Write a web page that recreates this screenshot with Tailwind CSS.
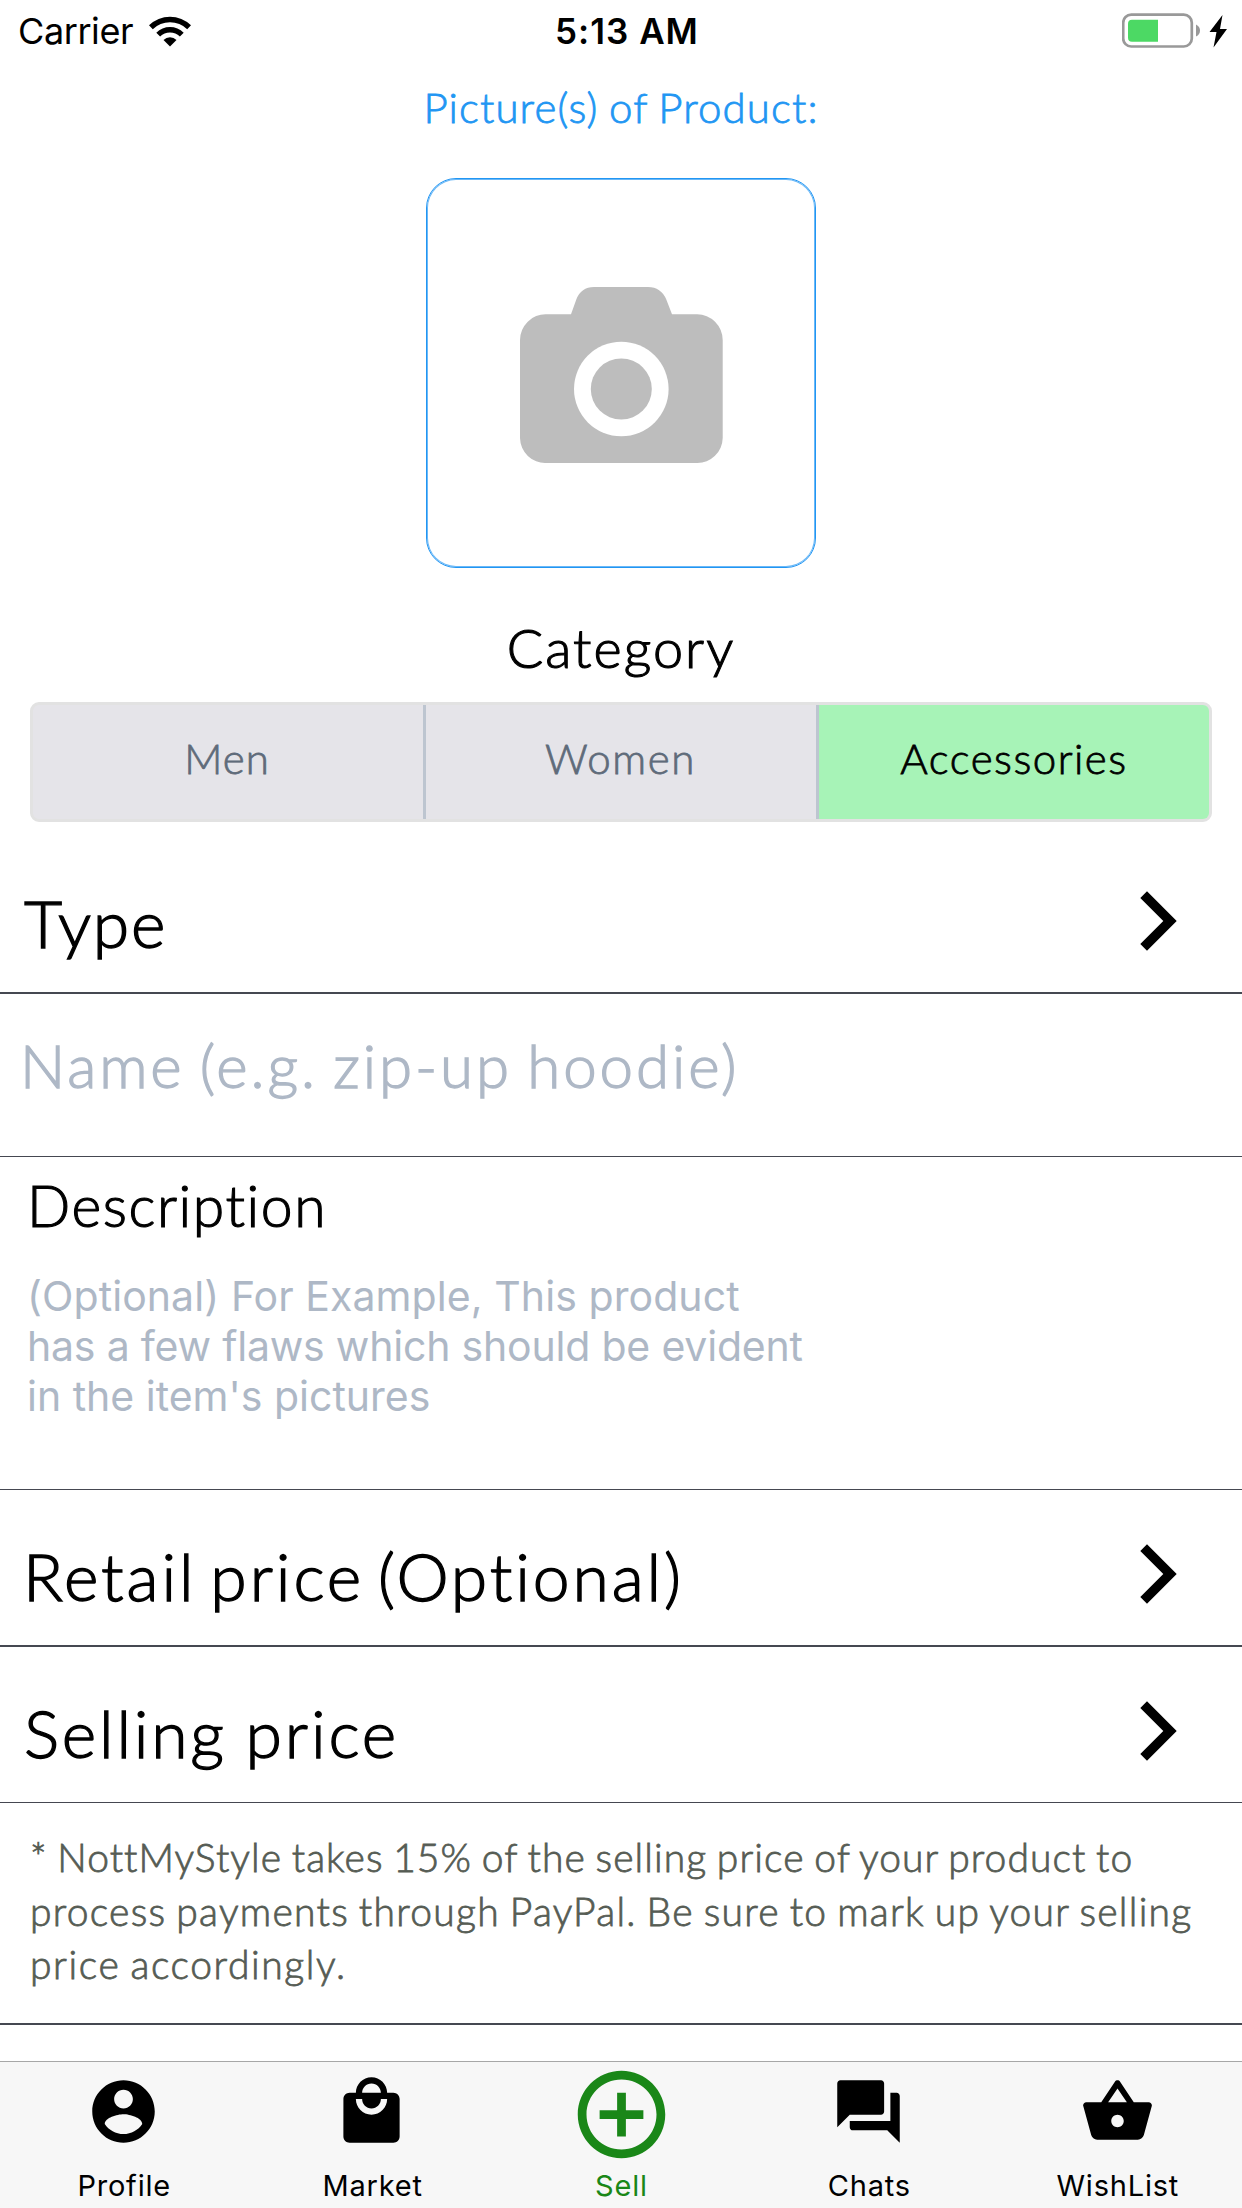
<!DOCTYPE html>
<html lang="en">
<head>
<meta charset="utf-8">
<title>Sell</title>
<script src="https://cdn.jsdelivr.net/npm/@tailwindcss/browser@4"></script>
</head>
<body class="bg-white">
<div class="w-[1242px] h-[2208px] flex flex-col overflow-hidden bg-white text-black font-['Lato',sans-serif] font-light [-webkit-text-stroke:0.8px]">

  <header class="relative h-[62px] shrink-0 flex items-center justify-between pl-[18px] pr-[14px] font-['Inter',sans-serif] font-normal [-webkit-text-stroke:0]">
    <div class="flex items-center gap-[16px]">
      <span class="text-[36px] tracking-[-0.41px]">Carrier</span>
      <svg class="w-[42px] h-[31px]" viewBox="0 0 42 31">
        <path d="M0 9.3A30 30 0 0 1 42 9.3L38.2 13.2A24.6 24.6 0 0 0 3.8 13.2Z"/>
        <path d="M7.3 16.7A19.6 19.6 0 0 1 34.7 16.7L30.9 20.6A14.2 14.2 0 0 0 11.1 20.6Z"/>
        <path d="M14.5 24A9.3 9.3 0 0 1 27.5 24L21 30.5Z"/>
      </svg>
    </div>
    <span class="absolute left-1/2 -translate-x-1/2 ml-[6px] text-[35px] font-semibold tracking-[1px] whitespace-nowrap">5:13 AM</span>
    <svg class="w-[106px] h-[36px]" viewBox="0 0 106 36">
      <rect x="1.2" y="1.7" width="68.6" height="31.8" rx="8" fill="none" stroke="#999" stroke-width="2.7"/>
      <path d="M10 6.700H36V28.700H10Q6 28.700 6 24.700V10.700Q6 6.700 10 6.700Z" fill="#4cd964"/>
      <path d="M74 11.500Q78 13.500 78 17.500T74 23.500Z" fill="#999"/>
      <path d="M100.500 2L87.500 19H94.500L91.500 34.500L105 16H98Z"/>
    </svg>
  </header>

  <main class="flex flex-col">
    <div class="h-[89px] pt-[2px] flex items-center justify-center text-[42px] tracking-[1.1px] [word-spacing:-2px] text-[#2196f3]">Picture(s) of Product:</div>

    <div class="mt-[27px] mx-auto size-[390px] rounded-[30px] border border-[#2196f3] shadow-[inset_0_0_0_1px_#6bb8f7] flex justify-center pt-[108px]">
      <svg class="w-[203px] h-[176px]" viewBox="0 0 203 176">
        <path fill="#bdbdbd" d="M51 27.300L56.300 12.500Q61 0 74 0H128Q141 0 146.300 12.500L152 27.300H177A25.500 26 0 0 1 202.700 53V151A25.500 25.500 0 0 1 177 176H26A25.500 25.500 0 0 1 0 151V53A25.500 26 0 0 1 26 27.300Z"/>
        <circle cx="101.300" cy="102" r="47.300" fill="#fff"/>
        <circle cx="101.300" cy="102" r="30.500" fill="#bdbdbd"/>
      </svg>
    </div>

    <div class="mt-[22px] h-[112px] pt-[2px] flex items-center justify-center text-[54px] tracking-[2px] [-webkit-text-stroke:1.1px]">Category</div>

    <div class="mx-[30px] h-[120px] flex rounded-[9px] border-[3px] border-[#e2e2e2] bg-[#e5e4e9] text-[42px] text-[#5f6b7a] overflow-hidden">
      <div class="w-[393px] border-r-[3px] border-[#bdc5d0] flex items-center justify-center pb-[7px] pr-[2px] tracking-[1px]">Men</div>
      <div class="w-[393px] border-r-[3px] border-[#bdc5d0] flex items-center justify-center pb-[7px] pr-px tracking-[1.6px]">Women</div>
      <div class="flex-1 flex items-center justify-center pb-[7px] tracking-[1.5px] bg-[#a7f3b7] text-black">Accessories</div>
    </div>

    <div class="mt-[28px] h-[144px] flex items-center justify-between pl-[24px] pr-[65px] border-b-2 border-[#454851]">
      <span class="pt-[2px] text-[66px] tracking-[1.7px] [-webkit-text-stroke:1.3px]">Type</span>
      <svg class="w-[37px] h-[60px]" viewBox="0 0 37 60"><path d="M0.300 7L7 0.300L36.700 30L7 59.700L0.300 53L23.300 30Z"/></svg>
    </div>

    <div class="h-[163px] flex items-center pl-[20px] pb-[20px] border-b border-[#454851] text-[60px] tracking-[2.92px] [word-spacing:-4px] text-[#aeb8c6] [-webkit-text-stroke:1.3px]">Name (e.g. zip-up hoodie)</div>

    <div class="h-[333px] pl-[27px] border-b border-[#454851]">
      <div class="h-[94px] pt-[3px] flex items-center text-[57px] tracking-[1.55px] [-webkit-text-stroke:1.1px]">Description</div>
      <div class="mt-[20px] flex flex-col font-['Inter',sans-serif] font-normal text-[41px] leading-[50px] text-[#aeb8c6] [-webkit-text-stroke:0]">
        <span class="tracking-[0.08px]">(Optional) For Example, This product</span>
        <span class="tracking-[-0.2px]">has a few flaws which should be evident</span>
        <span>in the item's pictures</span>
      </div>
    </div>

    <div class="h-[157px] flex items-center justify-between pt-[13px] pl-[23px] pr-[65px] border-b-2 border-[#454851]">
      <span class="pt-[2px] text-[66px] tracking-[2.9px] [word-spacing:-7px] [-webkit-text-stroke:1.3px]">Retail price (Optional)</span>
      <svg class="w-[37px] h-[60px]" viewBox="0 0 37 60"><path d="M0.300 7L7 0.300L36.700 30L7 59.700L0.300 53L23.300 30Z"/></svg>
    </div>

    <div class="h-[156px] flex items-center justify-between pt-[13px] pl-[24px] pr-[65px] border-b border-[#454851]">
      <span class="pt-[2px] text-[66px] tracking-[2.8px] [word-spacing:-2px] [-webkit-text-stroke:1.3px]">Selling price</span>
      <svg class="w-[37px] h-[60px]" viewBox="0 0 37 60"><path d="M0.300 7L7 0.300L36.700 30L7 59.700L0.300 53L23.300 30Z"/></svg>
    </div>

    <div class="h-[222px] flex flex-col pt-[28px] pl-[30px] border-b-2 border-[#454851] text-[39px] leading-[53.6px] text-[#565c54] [word-spacing:-2px] whitespace-nowrap">
      <span class="tracking-[1.07px]">* NottMyStyle takes 15% of the selling price of your product to</span>
      <span class="tracking-[1.28px]">process payments through PayPal. Be sure to mark up your selling</span>
      <span class="tracking-[1.6px]">price accordingly.</span>
    </div>
  </main>

  <nav class="mt-auto h-[147px] shrink-0 grid grid-cols-5 border-t border-[#a7a7a7] bg-[#f7f7f7] font-['Inter',sans-serif] font-normal text-[29px] leading-[37px] tracking-[0.8px] text-center [-webkit-text-stroke:0]">
    <div class="flex flex-col items-center">
      <div class="h-[105px] pt-[11.5px] pr-[2px]">
        <svg class="size-[75px]" viewBox="0 0 24 24"><path d="M12 2C6.480 2 2 6.480 2 12s4.480 10 10 10 10-4.480 10-10S17.520 2 12 2zm0 3c1.660 0 3 1.340 3 3s-1.340 3-3 3-3-1.340-3-3 1.340-3 3-3zm0 14.200c-2.500 0-4.710-1.280-6-3.220.030-1.990 4-3.080 6-3.080 1.990 0 5.970 1.090 6 3.080-1.290 1.940-3.500 3.220-6 3.220z"/></svg>
      </div>
      <span>Profile</span>
    </div>
    <div class="flex flex-col items-center">
      <div class="h-[105px] pt-[11.5px] pr-[2px]">
        <svg class="size-[75px]" viewBox="0 0 24 24"><path d="M19 6h-2c0-2.760-2.240-5-5-5S7 3.240 7 6H5c-1.100 0-1.990.900-1.990 2L3 20c0 1.100.900 2 2 2h14c1.100 0 2-.900 2-2V8c0-1.100-.900-2-2-2zm-7-3c1.660 0 3 1.340 3 3H9c0-1.660 1.340-3 3-3zm0 10c-2.760 0-5-2.240-5-5h2c0 1.660 1.340 3 3 3s3-1.340 3-3h2c0 2.760-2.240 5-5 5z"/></svg>
      </div>
      <span>Market</span>
    </div>
    <div class="flex flex-col items-center pl-px text-[#1a8718]">
      <svg class="size-[105px]" viewBox="0 0 24 24" fill="currentColor"><path d="M13 7h-2v4H7v2h4v4h2v-4h4v-2h-4V7zm-1-5C6.480 2 2 6.480 2 12s4.480 10 10 10 10-4.480 10-10S17.520 2 12 2zm0 18c-4.410 0-8-3.590-8-8s3.590-8 8-8 8 3.590 8 8-3.590 8-8 8z"/></svg>
      <span>Sell</span>
    </div>
    <div class="flex flex-col items-center">
      <div class="h-[105px] pt-[11.5px] pr-[2px]">
        <svg class="size-[75px]" viewBox="0 0 24 24"><path d="M21 6h-2v9H6v2c0 .550.450 1 1 1h11l4 4V7c0-.550-.450-1-1-1zm-4 6V3c0-.550-.450-1-1-1H3c-.550 0-1 .450-1 1v14l4-4h10c.550 0 1-.450 1-1z"/></svg>
      </div>
      <span>Chats</span>
    </div>
    <div class="flex flex-col items-center">
      <div class="h-[105px] pt-[11.5px]">
        <svg class="size-[75px]" viewBox="0 0 24 24"><path d="M17.210 9l-4.380-6.560c-.190-.280-.510-.420-.830-.420-.320 0-.640.140-.830.430L6.790 9H2c-.550 0-1 .450-1 1 0 .090.010.180.040.270l2.540 9.270c.230.840 1 1.460 1.920 1.460h13c.920 0 1.690-.620 1.930-1.460l2.540-9.270L23 10c0-.550-.450-1-1-1h-4.790zM9 9l3-4.400L15 9H9zm3 8c-1.100 0-2-.900-2-2s.900-2 2-2 2 .900 2 2-.900 2-2 2z"/></svg>
      </div>
      <span>WishList</span>
    </div>
  </nav>
</div>
</body>
</html>
